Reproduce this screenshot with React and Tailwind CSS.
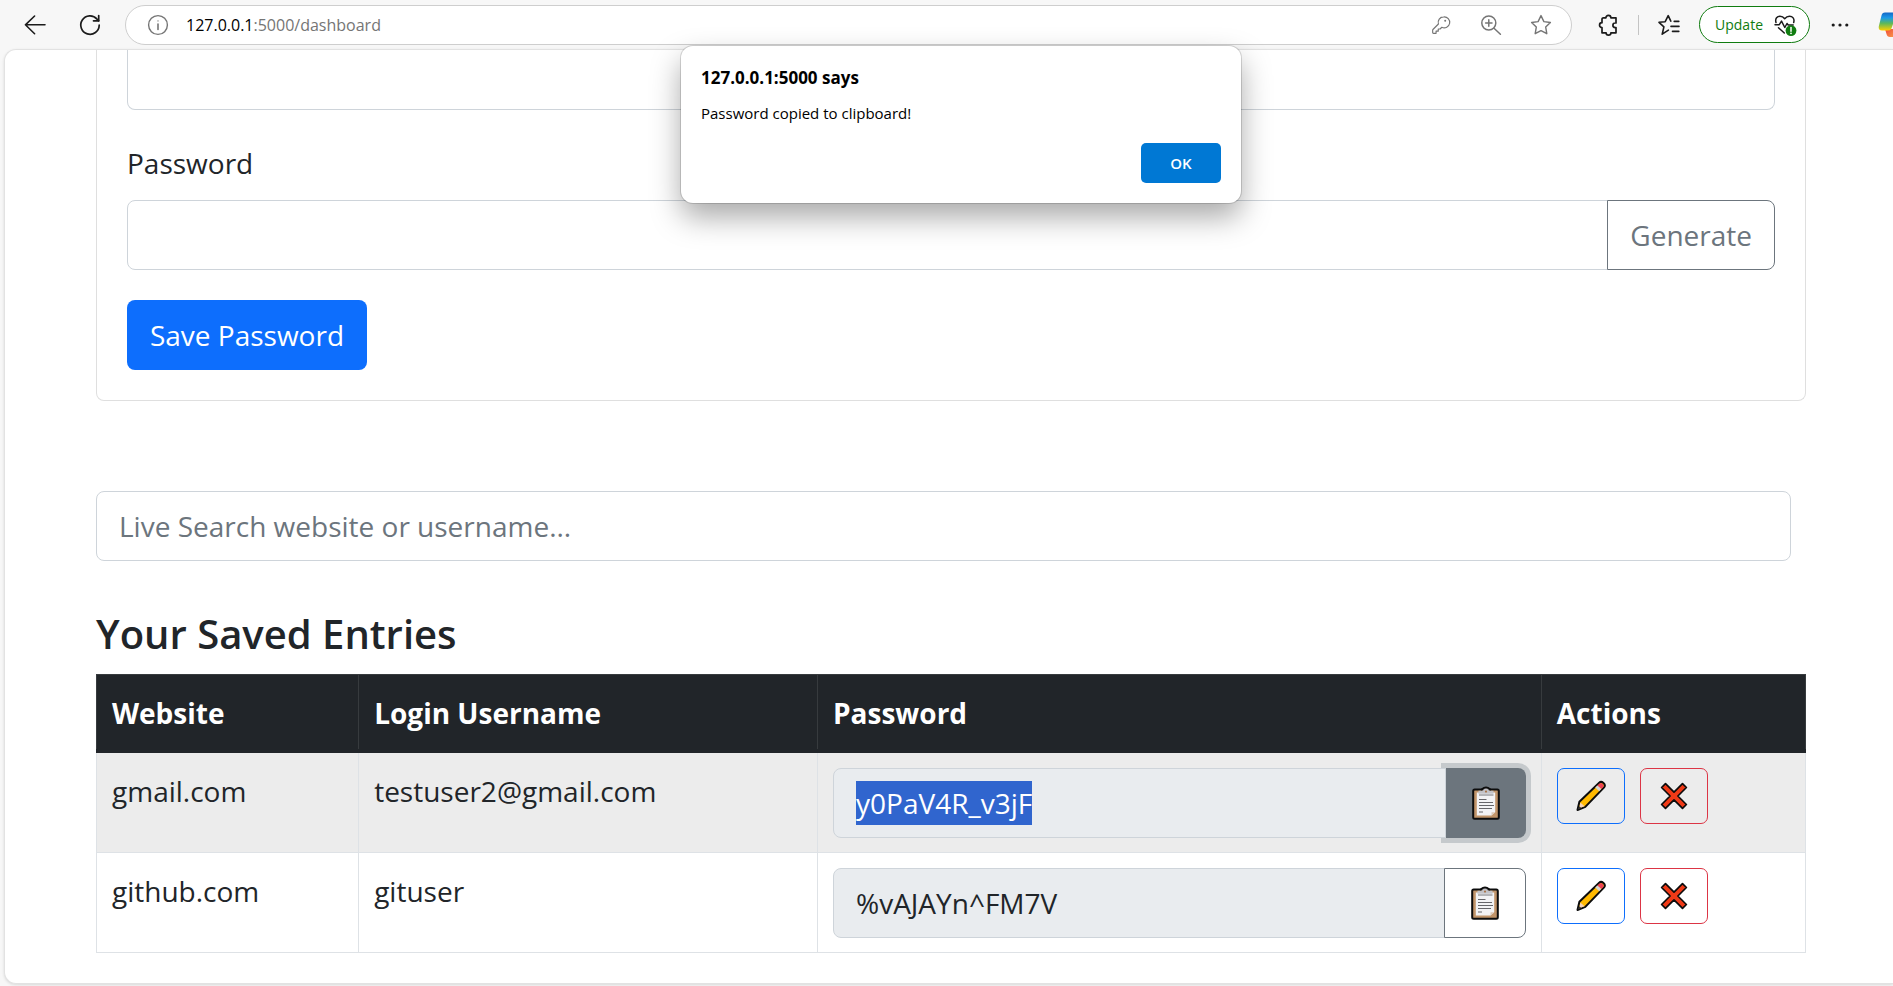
import { useEffect, useRef } from "react";

const entries = [
  { website: "gmail.com", username: "testuser2@gmail.com", password: "y0PaV4R_v3jF", copied: true },
  { website: "github.com", username: "gituser", password: "%vAJAYn^FM7V", copied: false },
];

function Icon({ className, children, width = 1.5 }) {
  return (
    <svg
      viewBox="0 0 24 24"
      className={className}
      fill="none"
      stroke="currentColor"
      strokeWidth={width}
      strokeLinecap="round"
      strokeLinejoin="round"
      aria-hidden="true"
    >
      {children}
    </svg>
  );
}

const starPath =
  "M12 2.6l2.9 6 6.5.9-4.7 4.6 1.1 6.6L12 17.6l-5.8 3.1 1.1-6.6L2.6 9.5l6.5-.9z";

function Toolbar() {
  return (
    <header className="flex h-[49px] shrink-0 items-center pl-[23px] text-[#1b1b1b]">
      <button type="button" aria-label="Back" className="shrink-0">
        <Icon className="size-6" width={1.6}>
          <path d="M22 11.8H2.4M11.6 3L2.4 11.8l9.2 8.9" />
        </Icon>
      </button>
      <button type="button" aria-label="Refresh" className="ml-[31px] shrink-0">
        <Icon className="size-6" width={1.7}>
          <path d="M21.2 12.2A9.2 9.2 0 1 1 19 6.1l1.7 1.7" />
          <path d="M20.7 2.6v5.2h-5.2" />
        </Icon>
      </button>
      <div className="ml-[23px] flex h-10 min-w-0 flex-1 items-center rounded-full border border-[#cecece] bg-white pl-5 text-[#757575]">
        <Icon className="size-6 shrink-0" width={1.4}>
          <circle cx="12" cy="12" r="9.4" />
          <path d="M12 11v5.4" strokeWidth="1.6" />
          <circle cx="12" cy="7.9" r="0.7" fill="currentColor" stroke="none" />
        </Icon>
        <div className="ml-4 flex-1 truncate text-base leading-6">
          <span className="text-black">127.0.0.1</span>:5000/dashboard
        </div>
        <button type="button" aria-label="Saved passwords" className="shrink-0">
          <Icon className="size-5" width={1.4}>
            <path d="M15.2 2.2a6.600 6.600 0 0 0-6.300 8.600l-6.600 6.600a.900.900 0 0 0-.300.700v3a.900.900 0 0 0 .900.900h3.200v-2.600h2.600v-2.600h2.200l2.100-2.100a6.600 6.600 0 1 0 2.200-12.500z" />
            <circle cx="17" cy="7" r="1.2" fill="currentColor" stroke="none" />
          </Icon>
        </button>
        <button type="button" aria-label="Zoom" className="ml-7 shrink-0">
          <Icon className="size-6">
            <circle cx="9.800" cy="10" r="7" />
            <path d="M15 15.300l6.400 6M9.800 6.800v6.400M6.600 10h6.400" />
          </Icon>
        </button>
        <button type="button" aria-label="Add to favorites" className="mr-[18px] ml-[26px] shrink-0">
          <Icon className="size-6" width={1.4}>
            <path d={starPath} />
          </Icon>
        </button>
      </div>
      <button type="button" aria-label="Extensions" className="ml-6 shrink-0">
        <Icon className="size-6" width={1.7}>
          <path d="M7.600 4.800h2.300a2.500 2.500 0 0 1 5 0h5.100v5.200h-.800a2.300 2.300 0 0 0 0 4.600h.800v5.200h-5.100a2.400 2.400 0 0 1-4.800 0H6V14.600a2.400 2.400 0 0 1 0-4.900V6.300a1.500 1.500 0 0 1 1.600-1.500z" />
        </Icon>
      </button>
      <span className="ml-[18px] h-5 w-px bg-[#c4c4c4]" />
      <button type="button" aria-label="Favorites" className="ml-[18px] shrink-0">
        <Icon className="size-6" width={1.6}>
          <path d="M11.400 17.200l-6.200 4 1.700-7.300L2 9.300l6.200-.600L11.200 2.600l2.600 5.600M17.200 8.400h4.600M14 13.400h8M15.500 18.400h6.300" />
        </Icon>
      </button>
      <button
        type="button"
        className="ml-[18px] flex h-[37px] shrink-0 items-center rounded-full border border-[#107c10] bg-white pr-3 pl-[15px] text-sm text-[#107c10]"
      >
        Update
        <svg viewBox="0 0 24 24" className="ml-2.5 size-6" fill="none" aria-hidden="true">
          <g stroke="#1b1b1b" strokeWidth="1.5" strokeLinecap="round" strokeLinejoin="round">
            <path d="M3 9.500C1.800 5.400 4.300 3.200 7 3.200c2.200 0 3.600 1 4.700 2.500 1.200-1.500 2.600-2.500 4.800-2.500 3 0 5.300 2.400 4.200 6.300" />
            <path d="M2 11.700h4.300l2.200-3.600 3.300 6.400 2.200-4 1.200 1.500h5M5.500 14.800l5.800 5.200" />
          </g>
          <circle cx="18" cy="17.600" r="5.400" fill="#107c10" />
          <path d="M18 14.400v3.800" stroke="#fff" strokeWidth="1.500" strokeLinecap="round" />
          <circle cx="18" cy="20.300" r="0.900" fill="#fff" />
        </svg>
      </button>
      <button type="button" aria-label="More" className="ml-[18px] shrink-0">
        <svg viewBox="0 0 24 24" className="size-6" fill="currentColor" aria-hidden="true">
          <circle cx="5.200" cy="12" r="1.600" />
          <circle cx="12" cy="12" r="1.600" />
          <circle cx="18.800" cy="12" r="1.600" />
        </svg>
      </button>
      <button type="button" aria-label="Copilot" className="ml-[26px] w-[15px] shrink-0 overflow-hidden">
        <svg viewBox="0 0 30 30" className="size-[30px] max-w-none" aria-hidden="true">
          <defs>
            <linearGradient id="cop" x1="0" y1="0" x2="0" y2="1">
              <stop offset="0" stopColor="#1468c7" />
              <stop offset="0.300" stopColor="#1c9be8" />
              <stop offset="0.600" stopColor="#5cb85c" />
              <stop offset="1" stopColor="#ffd000" />
            </linearGradient>
            <linearGradient id="cop2" x1="0" y1="0" x2="1" y2="1">
              <stop offset="0" stopColor="#f0483a" />
              <stop offset="1" stopColor="#f99a4a" />
            </linearGradient>
          </defs>
          <path d="M7 19h10l-2 8h-3c-2 0-3-1-3.500-3z" fill="url(#cop2)" />
          <path d="M7 2.500h12L14 17c-.800 2.500-1.500 3.500-4 3.500H4c-3 0-3.800-2-3-5l2.500-10C4 3.500 5 2.500 7 2.500z" fill="url(#cop)" />
        </svg>
      </button>
    </header>
  );
}

function ClipboardIcon() {
  return (
    <svg viewBox="0 0 28 34" className="h-[34px] w-7" aria-hidden="true">
      <rect x="1.200" y="3.600" width="25.600" height="29.200" rx="1.500" fill="#c19469" stroke="#0c0c0c" strokeWidth="2" />
      <path d="M9 3.800C10.500 3.800 10.500 1.400 14 1.400s3.500 2.400 5 2.400" fill="#c8c8cc" stroke="#0c0c0c" strokeWidth="2" />
      <path d="M4.800 6.500h18.400v19.700L19.500 29.500H4.800z" fill="#f3f3f5" />
      <path d="M23.200 26.200h-3.700v3.300z" fill="#dcc9b6" />
      <path d="M6.500 7.800V4.800H10c1.500 0 1.500-1.900 4-1.900s2.500 1.900 4 1.900h3.500v3z" fill="#c3c3c8" />
      <circle cx="14" cy="5.600" r="1.100" fill="#a9754a" />
      <path d="M7 9h14.500" stroke="#77777a" strokeWidth="1" />
      <path d="M7 13.500h7.500M7 16.500h14M7 19.500h15M7 22.500h13M7 26h4" stroke="#66666a" strokeWidth="1" />
    </svg>
  );
}

function PencilIcon() {
  return (
    <svg viewBox="0 0 32 32" className="size-8" aria-hidden="true">
      <path d="M2.500 30l1.900-8.200L24.200 2.700c2.500-2.300 7.300 1.600 4.900 4.700L10.300 26.900z" fill="#ffb900" stroke="#0c0c0c" strokeWidth="2" strokeLinejoin="round" />
      <path d="M24.600 3.600c1.800-1.400 5 1.200 3.700 3.300l-2 2.200-4-3.600z" fill="#ee4257" />
      <path d="M22.300 5.500l4 3.600-2.100 2.200-4-3.700z" fill="#d4d4d8" />
      <path d="M5.300 22.400l4.300 3.900-5.200 2z" fill="#f5d3b8" />
      <path d="M4.200 26.200l2.100 1.700-3.600 1.700z" fill="#333" />
    </svg>
  );
}

function CrossIcon() {
  return (
    <svg viewBox="0 0 28 28" className="size-7" aria-hidden="true">
      <path
        d="M5.500 1.600L14 10.100l8.500-8.500 3.900 3.900L17.900 14l8.500 8.500-3.900 3.900L14 17.900l-8.500 8.500-3.900-3.900L10.100 14 1.600 5.500z"
        fill="#f03a17"
        stroke="#0c0c0c"
        strokeWidth="1.700"
        strokeLinejoin="round"
      />
    </svg>
  );
}

const field =
  "min-w-0 border border-[#ced4da] px-[22px] py-3 text-[28px] leading-[44px] text-[#212529] outline-none";

function PasswordCell({ entry }) {
  const ref = useRef(null);
  useEffect(() => {
    if (entry.copied && ref.current) {
      ref.current.focus();
      ref.current.select();
    }
  }, [entry.copied]);
  return (
    <div className="flex">
      <input
        ref={ref}
        type="text"
        readOnly
        value={entry.password}
        aria-label={"Password for " + entry.website}
        className={field + " relative z-10 flex-1 rounded-l-lg bg-[#e9ecef] selection:bg-[#2f64cefe] selection:text-white"}
      />
      <button
        type="button"
        aria-label="Copy password"
        className={
          entry.copied
            ? "flex w-20 items-center justify-center rounded-r-lg bg-[#6c757d] ring-[5px] ring-[#c5c9cc]"
            : "relative z-20 -ml-px flex w-[82px] items-center justify-center rounded-r-lg border border-[#6c757d] bg-white"
        }
      >
        <ClipboardIcon />
      </button>
    </div>
  );
}

function EntriesTable() {
  const head = "border border-[#373b3e] px-[15px] pt-[15px] pb-[13px] text-left font-bold";
  const cell = "border border-[#dee2e6] px-[15px] pt-[15px] pb-[14px] align-top";
  return (
    <table className="w-full table-fixed border-collapse text-[28px] leading-[46px] text-[#212529]">
      <colgroup>
        <col className="w-[15.340%]" />
        <col className="w-[26.850%]" />
        <col className="w-[42.350%]" />
        <col />
      </colgroup>
      <thead className="border-b-4 border-[#212529] bg-[#212529] text-white">
        <tr>
          <th className={head}>Website</th>
          <th className={head}>Login Username</th>
          <th className={head}>Password</th>
          <th className={head}>Actions</th>
        </tr>
      </thead>
      <tbody>
        {entries.map((entry) => (
          <tr key={entry.website} className="odd:bg-[#ececec]">
            <td className={cell}>{entry.website}</td>
            <td className={cell}>{entry.username}</td>
            <td className={cell}>
              <PasswordCell entry={entry} />
            </td>
            <td className={cell}>
              <div className="flex gap-[15px]">
                <button
                  type="button"
                  aria-label="Edit entry"
                  className="flex h-14 w-[68px] items-center justify-center rounded-[7px] border border-[#0d6efd]"
                >
                  <PencilIcon />
                </button>
                <button
                  type="button"
                  aria-label="Delete entry"
                  className="flex h-14 w-[68px] items-center justify-center rounded-[7px] border border-[#dc3545]"
                >
                  <CrossIcon />
                </button>
              </div>
            </td>
          </tr>
        ))}
      </tbody>
    </table>
  );
}

function AlertDialog() {
  return (
    <div
      role="alertdialog"
      aria-labelledby="alert-title"
      aria-describedby="alert-text"
      className="absolute top-[46px] left-[681px] z-50 w-[560px] rounded-xl bg-white p-5 text-black shadow-[0_0_0_1px_rgba(0,0,0,0.14),0_14px_30px_rgba(0,0,0,0.34)]"
    >
      <h1 id="alert-title" className="text-[17px] leading-6 font-bold">
        127.0.0.1:5000 says
      </h1>
      <p id="alert-text" className="mt-[11px] text-[15px] leading-6">
        Password copied to clipboard!
      </p>
      <div className="mt-[18px] flex justify-end">
        <button type="button" className="h-10 w-20 rounded-[5px] bg-[#0078d4] text-[15px] font-semibold text-white">
          OK
        </button>
      </div>
    </div>
  );
}

export default function App() {
  return (
    <div className="relative flex min-h-screen flex-col overflow-hidden bg-[#f7f7f7] font-['Open_Sans','Noto_Sans',sans-serif]">
      <Toolbar />
      <main className="ml-1 flex-1 rounded-l-xl border border-r-0 border-[#e2e2e2] bg-white pr-[87px] pb-[29px] pl-[91px] shadow-[0_1px_3px_rgba(0,0,0,0.12)]">
        <form className="rounded-b-lg border border-t-0 border-[#dfdfdf] px-[30px] pb-[30px]">
          <input
            type="text"
            aria-label="Login Username"
            className="block h-[60px] w-full rounded-b-lg border border-t-0 border-[#ced4da] px-[22px] text-[28px] outline-none"
          />
          <label htmlFor="password" className="mt-[30px] block text-[28px] leading-[46px] text-[#212529]">
            Password
          </label>
          <div className="mt-[14px] flex">
            <input id="password" type="text" className={field + " flex-1 rounded-l-lg"} />
            <button
              type="button"
              className="-ml-px rounded-r-lg border border-[#6c757d] bg-white px-[22px] text-[28px] text-[#6c757d]"
            >
              Generate
            </button>
          </div>
          <button
            type="button"
            className="mt-[30px] h-[70px] w-[240px] rounded-lg bg-[#0d6efd] text-[28px] text-white"
          >
            Save Password
          </button>
        </form>
        <div className="mt-[90px] pr-[15px]">
          <input
            type="search"
            aria-label="Live search"
            placeholder="Live Search website or username..."
            className={field + " block w-full rounded-lg placeholder:text-[#6c757d]"}
          />
        </div>
        <h2 className="mt-[45px] mb-3 text-[40px] leading-[56px] font-semibold text-[#212529]">Your Saved Entries</h2>
        <EntriesTable />
      </main>
      <div className="h-[2px] shrink-0" />
      <AlertDialog />
    </div>
  );
}
